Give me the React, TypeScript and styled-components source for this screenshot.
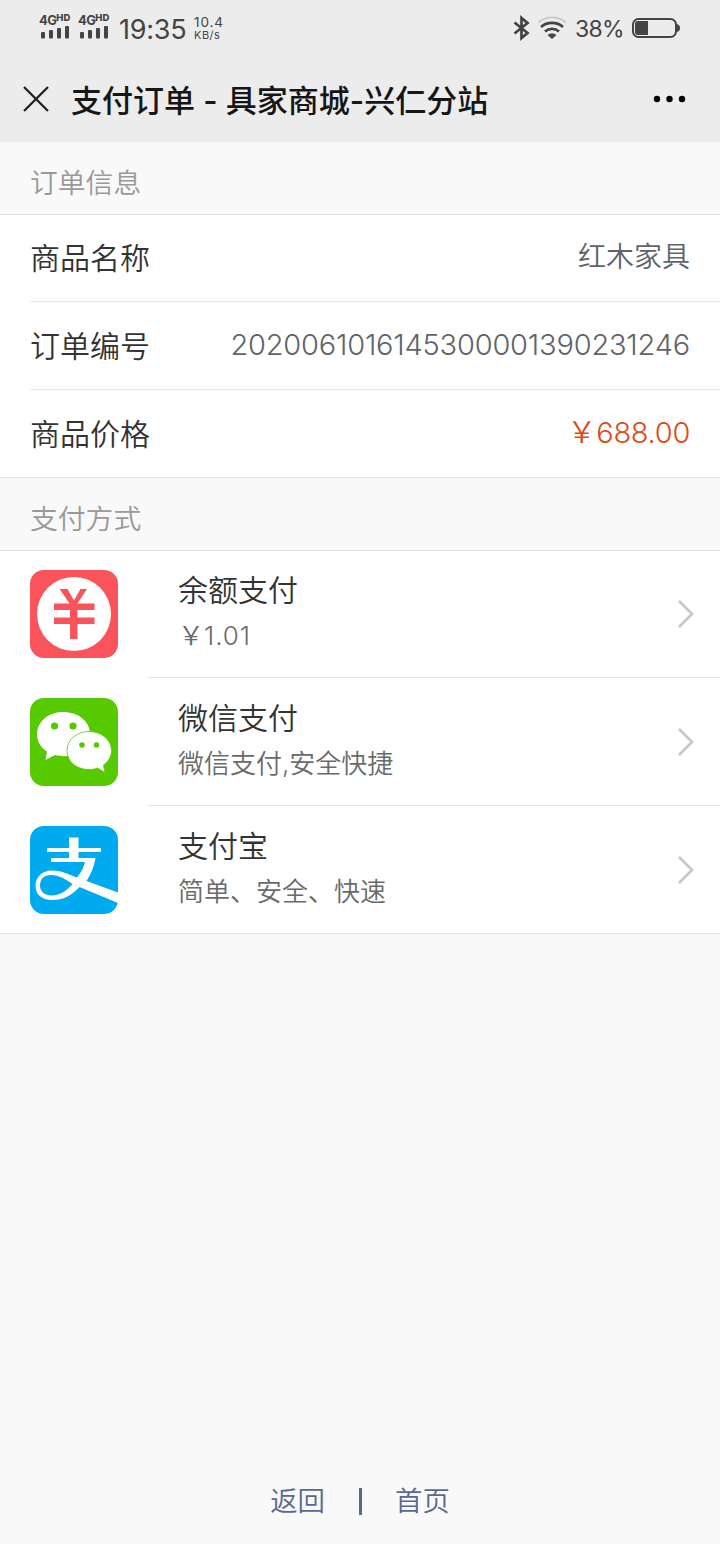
import React from "react";
import styled, { createGlobalStyle } from "styled-components";

const GlobalStyle = createGlobalStyle`
  * { box-sizing: border-box; }
  body { margin: 0; background: #f9f9f9; }
`;

const Page = styled.div`
  width: 720px;
  height: 1544px;
  display: flex;
  flex-direction: column;
  background: #f9f9f9;
  font-family: Inter, "Noto Sans CJK SC", sans-serif;
  font-weight: 350;
  white-space: nowrap;
  overflow: hidden;
`;

const Header = styled.header`
  height: 142px;
  background: #ececec;
`;

const StatusBar = styled.div`
  height: 56px;
  display: flex;
  justify-content: space-between;
  padding: 0 39px 0 39px;
  color: #444;
`;

const StatusGroup = styled.div`
  display: flex;
  align-items: flex-start;
`;

const Signal = styled.div`
  width: 39px;
  padding-top: 14px;
`;

const SignalLabel = styled.div`
  display: flex;
  height: 12px;
  font: 700 13px/13px Inter, sans-serif;
  letter-spacing: -0.6px;
`;

const SignalHd = styled.span`
  font-size: 9.5px;
  line-height: 8px;
  font-weight: 800;
  letter-spacing: 0;
`;

const Bars = styled.svg`
  display: block;
`;

const Clock = styled.div`
  width: 77px;
  padding: 14px 0 0 2px;
  font-size: 27px;
  line-height: 32px;
  font-weight: 400;
  letter-spacing: -0.25px;
`;

const Speed = styled.div`
  padding-top: 15px;
  font-size: 13.5px;
  line-height: 14px;
  font-weight: 400;
  letter-spacing: 0.9px;
`;

const SpeedUnit = styled.div`
  font-size: 11px;
  line-height: 13px;
  letter-spacing: 0.5px;
`;

const StatusIcon = styled.svg<{ $gap: number }>`
  margin: 15px ${(p) => p.$gap}px 0 0;
`;

const Percent = styled.div`
  width: 56px;
  padding-top: 14px;
  font-size: 23px;
  line-height: 30px;
  font-weight: 400;
  letter-spacing: -0.7px;
`;

const NavBar = styled.div`
  height: 86px;
  display: flex;
  align-items: center;
  padding: 0 33px 0 23px;
`;

const Title = styled.h1`
  flex: 1;
  margin: 3px 0 0 22px;
  color: #161616;
  font-size: 31px;
  line-height: 44px;
  font-weight: 500;
`;

const SectionTitle = styled.h2`
  height: 73px;
  margin: 0;
  padding: 20px 30px 0;
  border-bottom: 1px solid #e0e0e0;
  color: #999;
  font-size: 27.8px;
  line-height: 42px;
  font-weight: 350;
`;

const Panel = styled.section`
  background: #fff;
  border-bottom: 1px solid #e5e5e5;
`;

const InfoRow = styled.div<{ $height: number }>`
  height: ${(p) => p.$height}px;
  margin-left: 30px;
  padding-right: 30px;
  display: flex;
  align-items: center;
  justify-content: space-between;
  & + & { border-top: 1px solid #e8e8e8; }
`;

const Label = styled.span`
  color: #333;
  font-size: 30px;
  line-height: 44px;
`;

const Value = styled.span<{ $size?: number; $spacing?: number; $price?: boolean }>`
  color: ${(p) => (p.$price ? "#dc4c18" : "#5f646b")};
  font-size: ${(p) => p.$size ?? 28}px;
  font-weight: ${(p) => (p.$size ? 300 : 350)};
  line-height: 44px;
  letter-spacing: ${(p) => p.$spacing ?? 0}px;
  padding-bottom: 2px;
`;

const MethodRow = styled.div<{ $first: boolean; $last: boolean }>`
  height: ${(p) => (p.$first || p.$last ? 127 : 128)}px;
  display: flex;
  padding-left: 30px;
`;

const MethodIcon = styled.svg`
  flex: none;
  margin-top: 20px;

  ${MethodRow}:first-child & {
    margin-top: 19px;
  }
`;

const MethodBody = styled.div<{ $first: boolean; $last: boolean }>`
  flex: 1;
  display: flex;
  margin-left: 30px;
  padding: ${(p) => (p.$first ? 0 : 1)}px 25px 0 30px;
  border-bottom: ${(p) => (p.$last ? "none" : "1px solid #e5e5e5")};
`;

const MethodText = styled.div`
  flex: 1;
  padding-top: 16px;
`;

const MethodName = styled.div`
  color: #333;
  font-size: 30px;
  line-height: 46px;
`;

const MethodDesc = styled.div<{ $amount: boolean }>`
  color: #6a6a6a;
  font-size: 26px;
  line-height: ${(p) => (p.$amount ? 45 : 46)}px;
  letter-spacing: ${(p) => (p.$amount ? 0.9 : 0)}px;
`;

const Yen = styled.span`
  font-family: "Noto Sans CJK SC", sans-serif;
  font-weight: 350;
  letter-spacing: 0;
  line-height: 1;
`;

const Chevron = styled.svg`
  margin-top: 48px;
`;

const Footer = styled.footer`
  margin-top: auto;
  height: 64px;
  display: flex;
  justify-content: center;
  color: #58698f;
  font-size: 27.4px;
  line-height: 42px;
`;

const Divider = styled.span`
  width: 3px;
  height: 27px;
  margin: 8px 33px 0 34px;
  background: #586b94;
`;

const SignalMark = () => (
  <Signal>
    <SignalLabel>
      4G<SignalHd>HD</SignalHd>
    </SignalLabel>
    <Bars width="32" height="13" viewBox="0 0 32 13" fill="#444">
      <rect x="2" y="6" width="4" height="6.5" rx="1" />
      <rect x="10" y="4" width="4" height="8.5" rx="1" />
      <rect x="18" y="2" width="4" height="10.5" rx="1" />
      <rect x="26" y="0" width="4" height="12.5" rx="1" />
    </Bars>
  </Signal>
);

const BalanceIcon = () => (
  <MethodIcon width="88" height="88" viewBox="0 0 88 88">
    <rect width="88" height="88" rx="14" fill="#f9545b" />
    <circle cx="44" cy="44" r="37" fill="#fff" />
    <path
      d="M24 33.500H39.500L29.500 19H37.500L44 30.500L50.500 19H57L47.500 33.500H64.500V40H47.500V47.500H64.500V54H47.500V69H40V54H24V47.500H40V40H24Z"
      fill="#f9545b"
    />
  </MethodIcon>
);

const WechatIcon = () => (
  <MethodIcon width="88" height="88" viewBox="0 0 88 88">
    <rect width="88" height="88" rx="14" fill="#57c900" />
    <path
      d="M33 14C18 14 7 24 7 36.500C7 43.500 11 49.500 17 53.500L15.500 62L25 57C30 58.500 36 58.500 40 57.500L60 36C60 23 48 14 33 14Z"
      fill="#fff"
    />
    <path
      d="M59 33.500C46.500 33.500 37 42 37 52.500C37 63.500 46.500 71.500 59 71.500C62.500 71.500 65 71 67.500 70L75 74.500L73.500 67C78.500 63.500 81.500 58.500 81.500 52.500C81.500 42 71.500 33.500 59 33.500Z"
      fill="#fff"
      stroke="#57c900"
      strokeWidth="0.8"
    />
    <g fill="#57c900">
      <circle cx="24.500" cy="28" r="3.600" />
      <circle cx="43" cy="28" r="3.600" />
      <circle cx="52" cy="47" r="2.800" />
      <circle cx="66.500" cy="47" r="2.800" />
    </g>
  </MethodIcon>
);

const AlipayIcon = () => (
  <MethodIcon width="88" height="88" viewBox="0 0 88 88">
    <rect width="88" height="88" rx="14" fill="#00aaee" />
    <path
      d="M39 11.500H48.500V22H71V26H48.500V32H65.500C64 41 61 48 56.500 55L88 66.500V77L49.500 61C42 69.500 33 74 22 74C12 74 5.500 68.500 5.500 60C5.500 51 12 44.500 22 44.500C31 44.500 38 48 47 51.500C51 46.500 53.500 42 55 36H21V32H39V26H17V22H39Z"
      fill="#fff"
    />
    <path
      d="M42.500 58C36 53.500 29 49 21 49C14 49 10 53 10 59.500C10 66 15 69.500 22 69.500C30 69.500 37 64.500 42.500 58Z"
      fill="#00aaee"
    />
  </MethodIcon>
);

const methods = [
  { name: "余额支付", desc: <><Yen>￥</Yen>1.01</>, amount: true, Icon: BalanceIcon },
  { name: "微信支付", desc: "微信支付,安全快捷", amount: false, Icon: WechatIcon },
  { name: "支付宝", desc: "简单、安全、快速", amount: false, Icon: AlipayIcon },
];

export default function App() {
  return (
    <Page>
      <GlobalStyle />
      <Header>
        <StatusBar>
          <StatusGroup>
            <SignalMark />
            <SignalMark />
            <Clock>19:35</Clock>
            <Speed>
              10.4
              <SpeedUnit>KB/s</SpeedUnit>
            </Speed>
          </StatusGroup>
          <StatusGroup>
            <StatusIcon $gap={7} width="18" height="26" viewBox="0 0 18 26" fill="none" stroke="#444" strokeWidth="2.700">
              <path d="M1.500 7.500L14.500 18L8.500 23V3L14.500 8L1.500 18.500" />
            </StatusIcon>
            <StatusIcon $gap={7} width="30" height="26" viewBox="0 0 30 26" fill="none" stroke="#444" strokeWidth="2.700">
              <path d="M0 7.500C7.500 .8 20.500 .8 28 7.500" stroke="#ccc" strokeWidth="2" />
              <path d="M3 12C9 6.500 19 6.500 25 12M7 16.500C11 13 17 13 21 16.500" />
              <path d="M9.500 20Q14 16.500 18.500 20L14 24Z" fill="#444" stroke="none" />
            </StatusIcon>
            <Percent>38%</Percent>
            <StatusIcon $gap={0} width="50" height="26" viewBox="0 0 50 26">
              <rect x="2" y="4" width="43" height="18" rx="5.500" fill="none" stroke="#444" strokeWidth="2" />
              <path d="M7 6H17V20H7Q4 20 4 17V9Q4 6 7 6Z" fill="#444" />
              <path d="M46 9Q49 10 49 13T46 17Z" fill="#444" />
            </StatusIcon>
          </StatusGroup>
        </StatusBar>
        <NavBar>
          <svg width="26" height="26" viewBox="0 0 26 26" stroke="#222" strokeWidth="2.300">
            <path d="M1 1L25 25M25 1L1 25" />
          </svg>
          <Title>支付订单 - 具家商城-兴仁分站</Title>
          <svg width="34" height="8" viewBox="0 0 34 8">
            <circle cx="4" cy="4" r="3.200" />
            <circle cx="16.500" cy="4" r="3.200" />
            <circle cx="29" cy="4" r="3.200" />
          </svg>
        </NavBar>
      </Header>
      <SectionTitle>订单信息</SectionTitle>
      <Panel>
        <InfoRow $height={86}>
          <Label>商品名称</Label>
          <Value>红木家具</Value>
        </InfoRow>
        <InfoRow $height={88}>
          <Label>订单编号</Label>
          <Value $size={29} $spacing={-0.2}>2020061016145300001390231246</Value>
        </InfoRow>
        <InfoRow $height={88}>
          <Label>商品价格</Label>
          <Value $size={29} $spacing={-0.3} $price>
            <Yen>￥</Yen>688.00
          </Value>
        </InfoRow>
      </Panel>
      <SectionTitle>支付方式</SectionTitle>
      <Panel>
        {methods.map(({ name, desc, amount, Icon }, i) => {
          const first = i === 0;
          const last = i === methods.length - 1;
          return (
            <MethodRow key={name} $first={first} $last={last}>
              <Icon />
              <MethodBody $first={first} $last={last}>
                <MethodText>
                  <MethodName>{name}</MethodName>
                  <MethodDesc $amount={amount}>{desc}</MethodDesc>
                </MethodText>
                <Chevron width="18" height="30" viewBox="0 0 18 30" fill="none" stroke="#c5c5ca" strokeWidth="2.600">
                  <path d="M2 2L15 15L2 28" />
                </Chevron>
              </MethodBody>
            </MethodRow>
          );
        })}
      </Panel>
      <Footer>
        <span>返回</span>
        <Divider />
        <span>首页</span>
      </Footer>
    </Page>
  );
}
